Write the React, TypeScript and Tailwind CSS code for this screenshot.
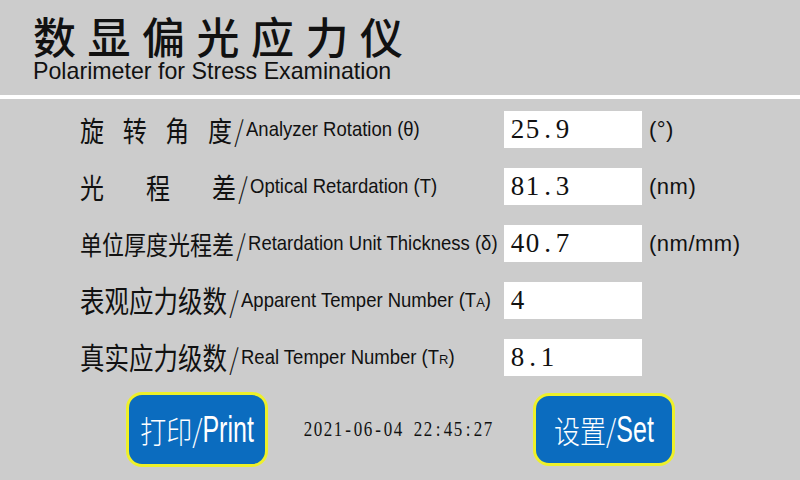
import React from 'react';

const cjk = '[font-family:"Noto_Sans_CJK_SC",sans-serif]';

type Row = {
  label: React.ReactNode;
  en: React.ReactNode;
  value: string;
  unit?: string;
};

// fixed-width character cells, like the panel's half-width song font
const Cells: React.FC<{ text: string; cell: string }> = ({ text, cell }) => (
  <span className="inline-flex">
    {text.split('').map((c, i) => (
      <span key={i} className={`${cell} inline-block text-center`}>
        {c === ' ' ? '\u00a0' : c}
      </span>
    ))}
  </span>
);

const Slash: React.FC = () => (
  <span className={`${cjk} inline-block w-[14px] text-center text-[24px] font-light scale-y-[1.2]`}>/</span>
);

const rows: Row[] = [
  {
    label: (
      <span className={`${cjk} flex w-[152px] justify-between text-[24px] scale-y-[1.2]`}>
        <span>旋</span>
        <span>转</span>
        <span>角</span>
        <span>度</span>
      </span>
    ),
    en: 'Analyzer Rotation (θ)',
    value: '25.9',
    unit: '(°)',
  },
  {
    label: (
      <span className={`${cjk} flex w-[156px] justify-between text-[24px] scale-y-[1.2]`}>
        <span>光</span>
        <span>程</span>
        <span>差</span>
      </span>
    ),
    en: 'Optical Retardation (T)',
    value: '81.3',
    unit: '(nm)',
  },
  {
    label: <span className={`${cjk} inline-block text-[22px] scale-y-[1.2]`}>单位厚度光程差</span>,
    en: 'Retardation Unit Thickness (δ)',
    value: '40.7',
    unit: '(nm/mm)',
  },
  {
    label: <span className={`${cjk} inline-block text-[24.5px] scale-y-[1.2]`}>表观应力级数</span>,
    en: (
      <>
        Apparent Temper Number (T<span className="text-[13px]">A</span>)
      </>
    ),
    value: '4',
  },
  {
    label: <span className={`${cjk} inline-block text-[24.5px] scale-y-[1.2]`}>真实应力级数</span>,
    en: (
      <>
        Real Temper Number (T<span className="text-[13px]">R</span>)
      </>
    ),
    value: '8.1',
  },
];

const PanelButton: React.FC<{ zh: string; en: string; h: string }> = ({ zh, en, h }) => (
  <button
    className={`w-[142px] ${h} shrink-0 rounded-[16px] border-[3px] border-[#eef02a] bg-[#0b6cbf] text-white flex items-center justify-center`}
  >
    <span className={`${cjk} inline-block text-[26px] font-light scale-y-[1.2]`}>{zh}/</span>
    <span className='inline-block [font-family:"Liberation_Sans",sans-serif] text-[25px] scale-y-[1.45]'>{en}</span>
  </button>
);

export default function App() {
  return (
    <div className="w-[800px] h-[480px] overflow-hidden bg-[#cccccc] text-[#111] flex flex-col">
      {/* Header */}
      <div className="h-[95px] pl-[33px] pt-[12px] shrink-0">
        <div className={`${cjk} text-[43px] leading-[46px] tracking-[11.5px] font-medium`}>数显偏光应力仪</div>
        <div className='mt-[1px] [font-family:"Liberation_Sans",sans-serif] text-[23.2px] leading-[24px]'>
          Polarimeter for Stress Examination
        </div>
      </div>
      <div className="h-[4px] bg-white shrink-0" />

      {/* Readings */}
      <div className="pt-[12px] pl-[80px] flex flex-col gap-[20px]">
        {rows.map((r, i) => (
          <div key={i} className="flex items-center h-[37px]">
            <div className="w-[424px] shrink-0 flex items-center whitespace-nowrap">
              {r.label}
              <Slash />
              <span className='[font-family:"Liberation_Sans",sans-serif] text-[18.5px] scale-y-[1.05] inline-block'>
                {r.en}
              </span>
            </div>
            <div className='w-[138px] h-[37px] shrink-0 bg-white pl-[6px] flex items-center [font-family:"Liberation_Serif",serif] text-[27px]'>
              <Cells text={r.value} cell="w-[15px]" />
            </div>
            {r.unit && (
              <span className='ml-[7px] [font-family:"Liberation_Sans",sans-serif] text-[22px] tracking-[0.5px]'>
                {r.unit}
              </span>
            )}
          </div>
        ))}
      </div>

      {/* Footer */}
      <div className="mt-[16px] pl-[126px] flex items-center">
        <PanelButton zh="打印" en="Print" h="h-[75px]" />
        <span className='ml-[35px] w-[230px] shrink-0 inline-block [font-family:"Liberation_Serif",serif] text-[17px] scale-y-[1.25] origin-left'>
          <Cells text="2021-06-04 22:45:27" cell="w-[10px]" />
        </span>
        <PanelButton zh="设置" en="Set" h="h-[73px]" />
      </div>
    </div>
  );
}
